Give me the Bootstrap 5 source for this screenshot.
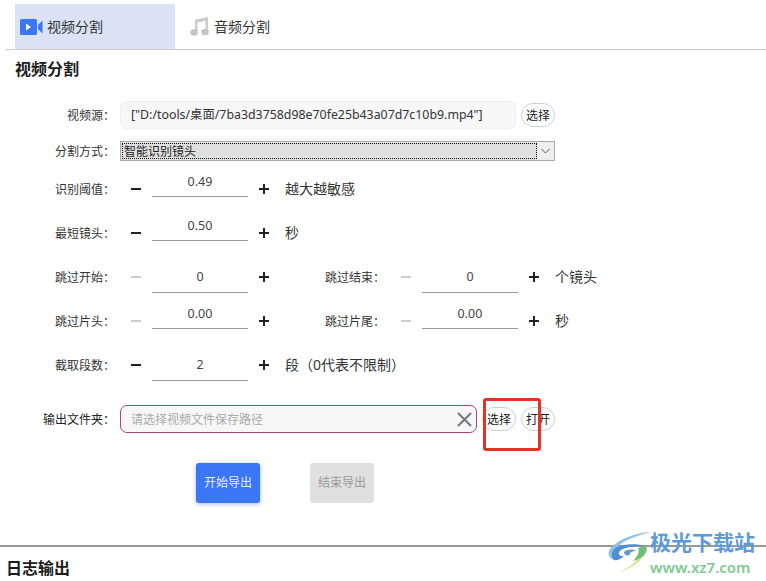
<!DOCTYPE html>
<html lang="zh">
<head>
<meta charset="utf-8">
<title>视频分割</title>
<link href="https://cdn.jsdelivr.net/npm/bootstrap@5.3.0/dist/css/bootstrap.min.css" rel="stylesheet">
<style>
html,body{height:581px;overflow:hidden;}
body{background:#fff;color:#333;font-family:"Noto Sans","Noto Sans CJK SC",sans-serif;font-size:12px;line-height:1.3;position:relative;}
.tabbar{margin:4px 0 0 5px;height:46px;border-bottom:1px solid #ccc;padding-left:10px;}
.tabitem{width:160px;height:45px;color:#333;font-size:14px;gap:4px;}
.tabitem span{padding-top:1px;}
.tab-on{background:#dae3f6;padding-left:5px;}
.tab-off{padding-left:15px;}
.sect-title{font-size:16px;font-weight:700;color:#1c1c1c;margin:0;line-height:20px;}
.title-a{padding:9px 0 0 15px;height:51px;}
.lbl{width:115px;margin-right:-7px;padding-top:1px;text-align:right;flex:none;white-space:nowrap;}
.fld-row{height:28px;}
.src-box{width:396px;height:28px;margin-left:12px;background:#f7f7f7;border:1px solid #eee;border-radius:7px;padding:1px 0 0 10px;flex:none;color:#333;white-space:nowrap;font-size:12.350px;}
.pill{height:24px;width:34px;border:1px solid #c9d0da;border-radius:12px;background:#fff;color:#222;font-size:12px;padding:1px 0 0;margin-left:5px;flex:none;}
.pill-first{margin-left:5px;}
.sel-row{height:20px;margin-top:12px;}
.sel-box{width:435px;height:20px;margin-left:12px;background:#e0e0e0;border:1px solid #aaa;flex:none;}
.sel-text{flex:1;border:1px dotted #111;margin:1px 0 1px 1px;line-height:15px;color:#222;padding-left:1px;}
.sel-arrow{width:17px;background:#eee;}
.steps{margin-top:6px;}
.step-row{height:44px;}
.stepper{margin-left:23px;width:138px;flex:none;}
.sym{width:10px;height:2px;background:#222;flex:none;position:relative;margin-top:21px;}
.sym-off{background:#ccc;}
.sym-plus::after{content:"";position:absolute;left:4px;top:-4px;width:2px;height:10px;background:#222;}
.val{width:96px;margin:0 11px;border-bottom:1px solid #999;font-size:12.500px;color:#444;flex:none;}
.val-up{height:26px;margin-top:4px;padding-bottom:2px;}
.val-mid{height:31px;margin-top:7px;}
.note{font-size:14px;color:#333;margin-left:16px;white-space:nowrap;}
.lbl-b{width:53px;margin-left:56px;padding-top:1px;text-align:right;flex:none;}
.stepper-b{margin-left:23px;}
.out-row{height:28px;margin-top:18px;}
.out-box{width:357px;height:28px;margin-left:12px;background:#f7f7f7;border:1px solid #b0457a;border-radius:7px;padding:0 4px 0 10px;flex:none;color:#aaa;}
.out-box span{padding-top:1px;}
.out-lbl{color:#222;}
.act-row{padding-left:196px;margin-top:30px;gap:50px;}
.act{width:64px;height:40px;border-radius:3px;border:0;padding:0;font-size:12px;}
.act-on{background:#3a76f5;color:#e8efff;box-shadow:0 1px 4px rgba(58,118,245,.5);}
.act-off{background:#e0e0e0;color:#999;}
.log-line{height:2px;background:#999;margin-top:42px;}
.title-b{padding:11px 0 0 6px;}
.mark-box{position:absolute;left:483px;top:398px;width:58px;height:53px;border:3px solid #e03526;border-radius:3px;}
.wm{position:absolute;left:605px;top:529px;width:155px;height:46px;}
.wm-logo{position:absolute;left:-5px;top:-4px;}
.wm-a{position:absolute;left:45px;top:0;font-size:21px;line-height:26px;font-weight:700;color:#5d9bd8;white-space:nowrap;}
.wm-b{position:absolute;left:45px;top:28px;font-size:15px;line-height:20px;font-weight:600;color:#7ecb92;white-space:nowrap;}
</style>
</head>
<body>
<div class="tabbar d-flex">
  <div class="tabitem tab-on d-flex align-items-center">
    <svg width="23" height="16" viewBox="0 0 23 16"><rect x="0" y="0" width="17" height="16" rx="1.5" fill="#3a76f5"/><path d="M6 4.500 11 8 6 11.500Z" fill="#fff"/><path d="M18 6 22.500 1.500V14.500L18 10Z" fill="#3a76f5"/></svg>
    <span>视频分割</span>
  </div>
  <div class="tabitem tab-off d-flex align-items-center">
    <svg width="20" height="19" viewBox="0 0 20 19"><path d="M5 2.500 18 0V3.500L7.500 5.500V15H5Z" fill="#ccc"/><rect x="15.500" y="1" width="2.500" height="14" fill="#ccc"/><ellipse cx="4" cy="15.500" rx="3.800" ry="3.200" fill="#c4c4c4"/><ellipse cx="15" cy="15" rx="3.800" ry="3.200" fill="#c4c4c4"/></svg>
    <span>音频分割</span>
  </div>
</div>
<div class="title-a"><h2 class="sect-title">视频分割</h2></div>
<div class="fld-row d-flex align-items-center">
  <div class="lbl">视频源：</div>
  <div class="src-box d-flex align-items-center">["D:/tools/桌面/7ba3d3758d98e70fe25b43a07d7c10b9.mp4"]</div>
  <button type="button" class="pill">选择</button>
</div>
<div class="sel-row d-flex align-items-center">
  <div class="lbl">分割方式：</div>
  <div class="sel-box d-flex">
    <div class="sel-text">智能识别镜头</div>
    <div class="sel-arrow d-flex align-items-center justify-content-center">
      <svg width="9" height="6" viewBox="0 0 9 6"><path d="M.5 1 4.500 5 8.500 1" fill="none" stroke="#555"/></svg>
    </div>
  </div>
</div>
<div class="steps">
  <div class="step-row d-flex">
    <div class="lbl align-self-center">识别阈值：</div>
    <div class="stepper d-flex"><i class="sym"></i><div class="val val-up d-flex align-items-center justify-content-center">0.49</div><i class="sym sym-plus"></i></div>
    <div class="note align-self-center">越大越敏感</div>
  </div>
  <div class="step-row d-flex">
    <div class="lbl align-self-center">最短镜头：</div>
    <div class="stepper d-flex"><i class="sym"></i><div class="val val-up d-flex align-items-center justify-content-center">0.50</div><i class="sym sym-plus"></i></div>
    <div class="note align-self-center">秒</div>
  </div>
  <div class="step-row d-flex">
    <div class="lbl align-self-center">跳过开始：</div>
    <div class="stepper d-flex"><i class="sym sym-off"></i><div class="val val-mid d-flex align-items-center justify-content-center">0</div><i class="sym sym-plus"></i></div>
    <div class="lbl-b align-self-center text-nowrap">跳过结束：</div>
    <div class="stepper stepper-b d-flex"><i class="sym sym-off"></i><div class="val val-mid d-flex align-items-center justify-content-center">0</div><i class="sym sym-plus"></i></div>
    <div class="note align-self-center">个镜头</div>
  </div>
  <div class="step-row d-flex">
    <div class="lbl align-self-center">跳过片头：</div>
    <div class="stepper d-flex"><i class="sym sym-off"></i><div class="val val-up d-flex align-items-center justify-content-center">0.00</div><i class="sym sym-plus"></i></div>
    <div class="lbl-b align-self-center text-nowrap">跳过片尾：</div>
    <div class="stepper stepper-b d-flex"><i class="sym sym-off"></i><div class="val val-up d-flex align-items-center justify-content-center">0.00</div><i class="sym sym-plus"></i></div>
    <div class="note align-self-center">秒</div>
  </div>
  <div class="step-row d-flex">
    <div class="lbl align-self-center">截取段数：</div>
    <div class="stepper d-flex"><i class="sym"></i><div class="val val-mid d-flex align-items-center justify-content-center">2</div><i class="sym sym-plus"></i></div>
    <div class="note align-self-center">段（0代表不限制）</div>
  </div>
</div>
<div class="out-row d-flex align-items-center">
  <div class="lbl out-lbl">输出文件夹：</div>
  <div class="out-box d-flex align-items-center justify-content-between">
    <span>请选择视频文件保存路径</span>
    <svg width="15" height="15" viewBox="0 0 15 15"><path d="M1 1 14 14M14 1 1 14" stroke="#777" stroke-width="2" fill="none"/></svg>
  </div>
  <button type="button" class="pill pill-first">选择</button>
  <button type="button" class="pill">打开</button>
</div>
<div class="act-row d-flex">
  <button type="button" class="act act-on">开始导出</button>
  <button type="button" class="act act-off">结束导出</button>
</div>
<div class="log-line"></div>
<div class="title-b"><h2 class="sect-title">日志输出</h2></div>

<div class="mark-box"></div>
<div class="wm">
  <svg class="wm-logo" width="60" height="50" viewBox="0 0 60 50">
    <path d="M50 7C35 8 18 14 10 24 7 29 9 33 14 35 11 30 14 24 22 18 30 13 40 10 50 7Z" fill="#8cc0ea"/>
    <path d="M14 35C9 28 14 21 24 20 30 19 38 19 46 21 38 21 28 21 21 25 17 28 19 32 24 31 21 34 17 36 14 35Z" fill="#4f8fd0"/>
    <path d="M24 27C27 24 33 24 36 26 32 26 29 28 30 30 27 31 24 30 24 27Z" fill="#5f9ad4"/>
    <path d="M46 21C49 27 43 34 33 36 38 31 40 26 38 23 41 22 44 21 46 21Z" fill="#6cbf72"/>
    <path d="M42 33C36 40 28 44 20 47 26 43 34 40 38 34Z" fill="#d8dc6e"/>
  </svg>
  <span class="wm-a">极光下载站</span>
  <span class="wm-b">www.xz7.com</span>
</div>
<script src="https://cdn.jsdelivr.net/npm/bootstrap@5.3.0/dist/js/bootstrap.bundle.min.js"></script>
</body>
</html>
